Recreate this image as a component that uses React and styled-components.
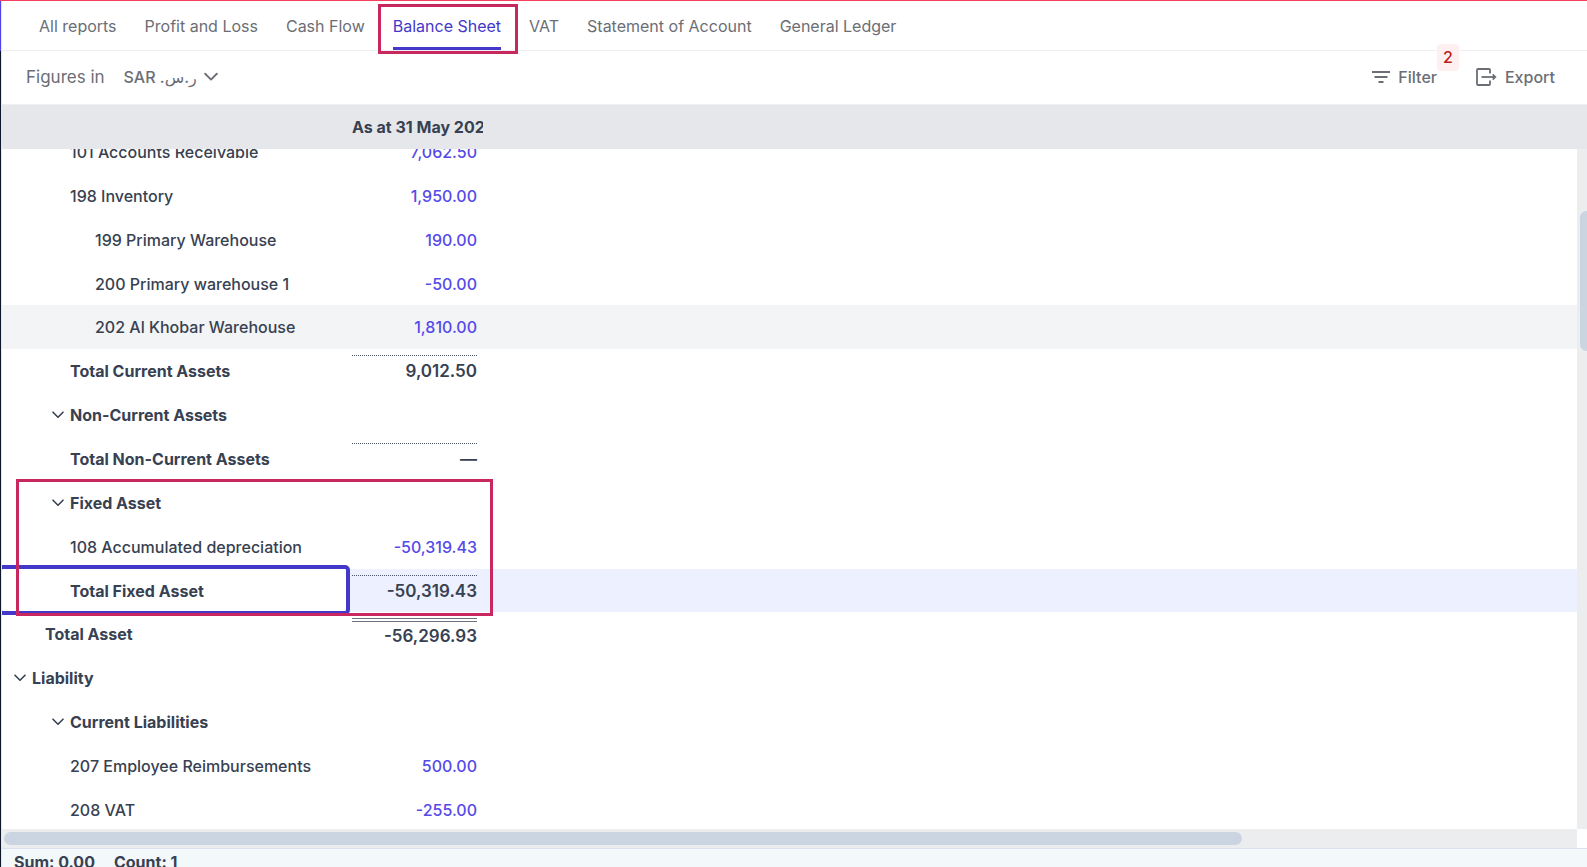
import React, { useState } from "react";
import styled, { createGlobalStyle, css } from "styled-components";

const GlobalStyle = createGlobalStyle`
* {
  box-sizing: border-box;
}
body {
  margin: 0;
  background: #fff;
  font-family: Inter, "DejaVu Sans", sans-serif;
  font-size: 16px;
  line-height: 24px;
  color: #374151;
}
button, select {
  font: inherit;
  color: inherit;
  border: none;
  background: none;
  padding: 0;
  margin: 0;
  cursor: pointer;
}
`;

const Page = styled.div`
height: 100vh;
display: flex;
overflow: hidden;
border-top: 1px solid #f43f5e;
`;

const Rail = styled.div`
flex: none;
width: 1px;
background: linear-gradient(#4f46e5 50px, #0f172a 50px);
`;

const Main = styled.div`
flex: 1;
min-width: 0;
display: flex;
flex-direction: column;
border-left: 1px solid #e5e7eb;
`;

const Tabs = styled.nav`
flex: none;
height: 50px;
display: flex;
gap: 28px;
padding: 0 37px;
border-bottom: 1px solid #eeeff1;
`;

const Tab = styled.a`
position: relative;
display: flex;
align-items: center;
color: #6b6e75;
text-decoration: none;
white-space: nowrap;
${({ $active }) => $active && css`
  color: #4338ca;
  box-shadow: inset 0 -3px #4338ca;
  &::after {
    content: "";
    position: absolute;
    inset: 3px -17px -4px -15px;
    border: 3px solid #c9275f;
    pointer-events: none;
  }
`}
`;

const Toolbar = styled.div`
flex: none;
height: 54px;
display: flex;
align-items: center;
padding: 0 32px 1px 24px;
border-bottom: 1px solid #eeeff1;
color: #6b6e75;
`;

const CurrencyLabel = styled.label`
font-size: 17px;
margin-right: 19px;
`;

const SelectBox = styled.div`
display: grid;
align-items: center;
font-weight: 500;
select {
  grid-area: 1 / 1;
  appearance: none;
  padding-right: 20px;
  outline: none;
}
svg {
  grid-area: 1 / 1;
  justify-self: end;
  pointer-events: none;
}
`;

const Actions = styled.div`
margin-left: auto;
display: flex;
gap: 39px;
`;

const Action = styled.button`
position: relative;
display: flex;
align-items: center;
gap: 8px;
font-weight: 500;
`;

const Badge = styled.span`
position: absolute;
right: -22px;
top: -21px;
width: 22px;
height: 27px;
border-radius: 4px;
background: #fef0f0;
color: #b91c1c;
text-align: center;
line-height: 27px;
`;

const HeadRow = styled.div`
flex: none;
display: flex;
height: 44px;
align-items: center;
background: #e5e7eb;
padding-left: 350px;
font-weight: 700;
`;

const HeadCell = styled.div`
width: 131px;
overflow: hidden;
white-space: nowrap;
`;

const Body = styled.div`
flex: 1;
min-height: 0;
display: grid;
grid-template-columns: minmax(0, 1fr) 10px;
grid-template-rows: minmax(0, 1fr) 19px;
`;

const Viewport = styled.div`
position: relative;
overflow: hidden;
`;

/* the list is scrolled a little, so the first row is half hidden */
const Table = styled.table`
width: 100%;
margin-top: -19px;
border-collapse: collapse;
table-layout: fixed;
`;

const Row = styled.tr`
height: 44px;
background: ${({ $state }) => ($state === "hover" ? "#f3f4f6" : $state === "selected" ? "#edf0fe" : "#fff")};
&:nth-child(7n + 4) {
  height: 43px;
}
`;

const NameCell = styled.th`
position: relative;
padding: 0 0 0 ${({ $indent }) => $indent}px;
text-align: left;
white-space: nowrap;
font-weight: ${({ $bold }) => ($bold ? 700 : 500)};
${({ $focused }) => $focused && css`
  background: #fff;
  &::after {
    content: "";
    position: absolute;
    inset: -4px 0 -3px -4px;
    border: 4px solid #4338ca;
    border-radius: 5px;
  }
`}
`;

const Toggle = styled.button`
display: flex;
align-items: center;
gap: 6px;
`;

const AmountCell = styled.td`
padding: 0 0 0 2px;
vertical-align: top;
`;

const Amount = styled.div`
text-align: right;
padding-top: 10px;
font-size: ${({ $bold }) => ($bold ? 17 : 16)}px;
font-weight: ${({ $bold }) => ($bold ? 600 : 500)};
${({ $rule }) => $rule === "dotted" && css`
  margin-top: 6px;
  padding-top: 3px;
  border-top: 1px dotted #4b5563;
`}
${({ $rule }) => $rule === "double" && css`
  margin-top: 6px;
  padding-top: 2px;
  border-top: 4px double #6b7280;
`}
`;

const AmountLink = styled.a`
color: #554ae8;
text-decoration: none;
`;

const Highlight = styled.div`
position: absolute;
left: 14px;
top: 330px;
width: 477px;
height: 137px;
border: 3px solid #c9275f;
pointer-events: none;
`;

const VTrack = styled.div`
background: #ecedef;
padding: 62px 0 0 3px;
overflow: hidden;
`;

const VThumb = styled.div`
width: 13px;
height: 140px;
border-radius: 7px;
background: #cbd5e1;
`;

const HTrack = styled.div`
background: #ecedef;
padding: 3px 6px 3px 2px;
`;

const HThumb = styled.div`
width: 79%;
height: 13px;
border-radius: 7px;
background: #cbd5e1;
`;

const Status = styled.footer`
flex: none;
height: 19px;
display: flex;
gap: 19px;
padding: 1px 12px 0;
border-top: 1px solid #dbe1ee;
background: #f3f8fb;
font-weight: 700;
overflow: hidden;
`;

const tabs = ["All reports", "Profit and Loss", "Cash Flow", "Balance Sheet", "VAT", "Statement of Account", "General Ledger"];

const rows = [
  { name: "101 Accounts Receivable", indent: 68, amount: "7,062.50" },
  { name: "198 Inventory", indent: 68, amount: "1,950.00" },
  { name: "199 Primary Warehouse", indent: 93, amount: "190.00" },
  { name: "200 Primary warehouse 1", indent: 93, amount: "-50.00" },
  { name: "202 Al Khobar Warehouse", indent: 93, amount: "1,810.00", state: "hover" },
  { name: "Total Current Assets", indent: 68, amount: "9,012.50", rule: "dotted" },
  { name: "Non-Current Assets", indent: 50, group: true },
  { name: "Total Non-Current Assets", indent: 68, amount: "—", rule: "dotted" },
  { name: "Fixed Asset", indent: 50, group: true },
  { name: "108 Accumulated depreciation", indent: 68, amount: "-50,319.43" },
  { name: "Total Fixed Asset", indent: 68, amount: "-50,319.43", rule: "dotted", state: "selected" },
  { name: "Total Asset", indent: 43, amount: "-56,296.93", rule: "double" },
  { name: "Liability", indent: 12, group: true },
  { name: "Current Liabilities", indent: 50, group: true },
  { name: "207 Employee Reimbursements", indent: 68, amount: "500.00" },
  { name: "208 VAT", indent: 68, amount: "-255.00" },
];

const Chevron = ({ size = 12 }) => (
  <svg width={size} height={size} viewBox="0 0 12 12" fill="none" stroke="currentColor" strokeWidth="1.6" strokeLinecap="round" strokeLinejoin="round" aria-hidden="true">
    <path d="M1 3.2l5 5 5-5" />
  </svg>
);

const FilterIcon = () => (
  <svg width="18" height="14" viewBox="0 0 18 14" fill="none" stroke="currentColor" strokeWidth="2" aria-hidden="true">
    <path d="M0 2h18M2.500 7h13M6.500 12h5" />
  </svg>
);

const ExportIcon = () => (
  <svg width="21" height="18" viewBox="0 0 21 18" fill="none" stroke="currentColor" strokeWidth="1.8" strokeLinejoin="round" aria-hidden="true">
    <path d="M14 5.500V2a1 1 0 0 0-1-1H2a1 1 0 0 0-1 1v14a1 1 0 0 0 1 1h11a1 1 0 0 0 1-1v-3.500" />
    <path d="M5.500 9H18" />
    <path d="M17 6l3.200 3L17 12z" fill="currentColor" strokeWidth="0.800" />
  </svg>
);

const App = () => {
  const [activeTab, setActiveTab] = useState("Balance Sheet");

  return (
    <Page>
      <GlobalStyle />
      <Rail />
      <Main>
        <Tabs>
          {tabs.map((tab) => (
            <Tab key={tab} href="#" $active={tab === activeTab} onClick={() => setActiveTab(tab)}>{tab}</Tab>
          ))}
        </Tabs>
        <Toolbar>
          <CurrencyLabel htmlFor="currency">Figures in</CurrencyLabel>
          <SelectBox>
            <select id="currency">
              <option>{"SAR ر.س.\u200f"}</option>
            </select>
            <Chevron size={14} />
          </SelectBox>
          <Actions>
            <Action>
              <FilterIcon />
              Filter
              <Badge>2</Badge>
            </Action>
            <Action>
              <ExportIcon />
              Export
            </Action>
          </Actions>
        </Toolbar>
        <HeadRow>
          <HeadCell>As at 31 May 2025</HeadCell>
        </HeadRow>
        <Body>
          <Viewport>
            <Table>
              <colgroup>
                <col width="348" />
                <col width="127" />
                <col />
              </colgroup>
              <tbody>
                {rows.map((row) => {
                  const bold = row.group || Boolean(row.rule);
                  return (
                    <Row key={row.name} $state={row.state}>
                      <NameCell scope="row" $indent={row.indent} $bold={bold} $focused={row.state === "selected"}>
                        {row.group ? <Toggle><Chevron />{row.name}</Toggle> : row.name}
                      </NameCell>
                      <AmountCell>
                        {row.amount && (
                          <Amount $bold={bold} $rule={row.rule}>
                            {bold ? row.amount : <AmountLink href="#">{row.amount}</AmountLink>}
                          </Amount>
                        )}
                      </AmountCell>
                      <td />
                    </Row>
                  );
                })}
              </tbody>
            </Table>
            <Highlight />
          </Viewport>
          <VTrack><VThumb /></VTrack>
          <HTrack><HThumb /></HTrack>
        </Body>
        <Status>
          <span>Sum: 0.00</span>
          <span>Count: 1</span>
        </Status>
      </Main>
    </Page>
  );
};

export default App;
